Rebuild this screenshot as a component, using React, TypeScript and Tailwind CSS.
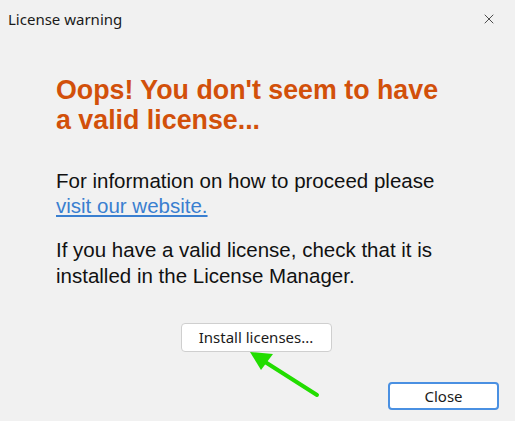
import { X } from 'lucide-react';

export default function App() {
  return (
    <div className="relative w-[515px] h-[421px] bg-[#f1f1f1] overflow-hidden flex flex-col">
      {/* barra de título */}
      <div className="h-[38px] flex items-center justify-between pl-[8px] pr-[18px] font-['Noto_Sans',sans-serif] text-[15px] text-[#1a1a1a]">
        <span>License warning</span>
        <X size={16} strokeWidth={1.3} className="text-[#333]" />
      </div>

      <div className="flex flex-col pl-[56px] pr-[10px] pt-[37px] font-['Liberation_Sans',Arial,sans-serif]">
        <h1 className="text-[26.8px] leading-[30px] font-bold text-[#d2500a]">
          Oops! You don't seem to have
          <br />
          a valid license...
        </h1>

        <p className="mt-[33px] text-[20.5px] leading-[25px] text-[#111]">
          For information on how to proceed please
          <br />
          <a className="text-[#3a7fd0] underline">visit our website.</a>
        </p>

        <p className="mt-[19px] text-[20.5px] leading-[26px] text-[#111]">
          If you have a valid license, check that it is
          <br />
          installed in the License Manager.
        </p>
      </div>

      <div className="flex justify-center pr-[3px] mt-[34px]">
        <button className="w-[151px] h-[29px] bg-white border border-[#cfcfcf] rounded-[4px] font-['Noto_Sans',sans-serif] text-[15px] text-[#1a1a1a]">
          Install licenses...
        </button>
      </div>

      <div className="flex justify-end pr-[16px] mt-[30px]">
        <button className="w-[111px] h-[28px] bg-white border-2 border-[#4a90e2] rounded-[4px] font-['Noto_Sans',sans-serif] text-[15px] text-[#1a1a1a]">
          Close
        </button>
      </div>

      {/* flecha verde */}
      <svg className="absolute left-0 top-0 pointer-events-none" width="515" height="421">
        <line x1="317" y1="395" x2="262" y2="360" stroke="#22dd00" strokeWidth="4" strokeLinecap="round" />
        <polygon points="250,352 273,354 261,370" fill="#22dd00" />
      </svg>
    </div>
  );
}
